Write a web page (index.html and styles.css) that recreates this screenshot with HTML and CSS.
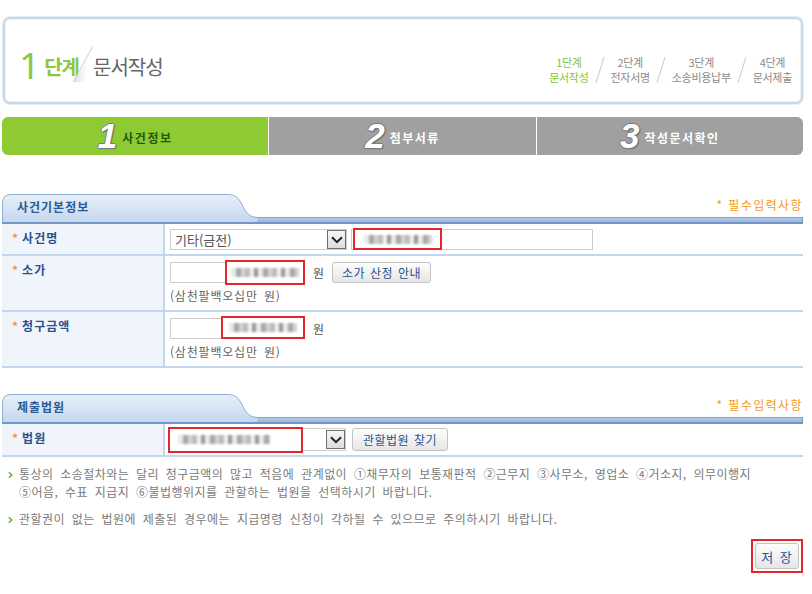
FILE: index.html
```html
<!DOCTYPE html>
<html lang="ko">
<head>
<meta charset="utf-8">
<title>1단계 문서작성</title>
<link rel="stylesheet" href="styles.css">
</head>
<body>
<div class="page">
  <header class="head">
    <div class="head-title">
      <span class="h-num">1</span>
      <span class="h-step">단계</span>
      <svg class="h-slash" width="26" height="40" viewBox="0 0 26 40">
        <defs>
          <linearGradient id="sl" x1="0" y1="0" x2="1" y2="0">
            <stop offset="0" stop-color="#d9d9d9"/>
            <stop offset="1" stop-color="#ffffff" stop-opacity="0"/>
          </linearGradient>
        </defs>
        <polygon points="24,2 4,38 16,38" fill="url(#sl)"/>
        <line x1="24" y1="2" x2="4" y2="38" stroke="#cfcfcf" stroke-width="1"/>
      </svg>
      <span class="h-name">문서작성</span>
    </div>
    <ol class="steps">
      <li class="step on"><span>1단계</span><span>문서작성</span></li>
      <li class="sep"><svg width="10" height="28" viewBox="0 0 10 28"><line x1="9" y1="1" x2="1" y2="27" stroke="#c9c9c9" stroke-width="1"/></svg></li>
      <li class="step"><span>2단계</span><span>전자서명</span></li>
      <li class="sep"><svg width="10" height="28" viewBox="0 0 10 28"><line x1="9" y1="1" x2="1" y2="27" stroke="#c9c9c9" stroke-width="1"/></svg></li>
      <li class="step"><span>3단계</span><span>소송비용납부</span></li>
      <li class="sep"><svg width="10" height="28" viewBox="0 0 10 28"><line x1="9" y1="1" x2="1" y2="27" stroke="#c9c9c9" stroke-width="1"/></svg></li>
      <li class="step"><span>4단계</span><span>문서제출</span></li>
    </ol>
  </header>

  <nav class="tabs">
    <div class="tab on"><span class="tnum">1</span><span class="tlabel">사건정보</span></div>
    <div class="tab"><span class="tnum">2</span><span class="tlabel">첨부서류</span></div>
    <div class="tab"><span class="tnum">3</span><span class="tlabel">작성문서확인</span></div>
  </nav>

  <section class="sec sec1">
    <div class="sec-head">
      <div class="sec-tab">
        <svg width="256" height="30" viewBox="0 0 256 30">
          <defs>
            <linearGradient id="tg1" x1="0" y1="0" x2="0" y2="1">
              <stop offset="0" stop-color="#e8f0f9"/>
              <stop offset="1" stop-color="#c2d5ec"/>
            </linearGradient>
          </defs>
          <path d="M0.5,30 V9 Q0.5,0.5 9,0.5 H226 Q234,0.5 238,7 L243,16 Q247,23.5 256,23.5 V30 Z" fill="url(#tg1)" stroke="#8eb0d6"/>
          <rect x="0" y="28" width="256" height="2" fill="#7097c7"/>
        </svg>
        <h2>사건기본정보</h2>
      </div>
      <p class="req">* 필수입력사항</p>
      <div class="bar"></div>
    </div>

    <div class="row">
      <div class="lbl"><i>*</i>사건명</div>
      <div class="val">
        <div class="line">
          <div class="sel sel-case"><span class="sel-text">기타(금전)</span><span class="sel-btn"><svg width="12" height="8" viewBox="0 0 12 8"><path d="M1 1.2 L6 6.2 L11 1.2" stroke="#222" stroke-width="2" fill="none"/></svg></span></div>
          <div class="inp inp-name"><span class="redbox rb-name"><span class="mosaic"></span></span></div>
        </div>
      </div>
    </div>

    <div class="row">
      <div class="lbl"><i>*</i>소가</div>
      <div class="val">
        <div class="line">
          <div class="inp inp-num"><span class="redbox rb-num1"><span class="mosaic"></span></span></div>
          <span class="unit">원</span>
          <button class="btn btn-guide" type="button">소가 산정 안내</button>
        </div>
        <p class="hint">(삼천팔백오십만 원)</p>
      </div>
    </div>

    <div class="row">
      <div class="lbl"><i>*</i>청구금액</div>
      <div class="val">
        <div class="line">
          <div class="inp inp-num"><span class="redbox rb-num2"><span class="mosaic"></span></span></div>
          <span class="unit">원</span>
        </div>
        <p class="hint">(삼천팔백오십만 원)</p>
      </div>
    </div>
  </section>

  <section class="sec sec2">
    <div class="sec-head">
      <div class="sec-tab">
        <svg width="256" height="30" viewBox="0 0 256 30">
          <defs>
            <linearGradient id="tg2" x1="0" y1="0" x2="0" y2="1">
              <stop offset="0" stop-color="#e8f0f9"/>
              <stop offset="1" stop-color="#c2d5ec"/>
            </linearGradient>
          </defs>
          <path d="M0.5,30 V9 Q0.5,0.5 9,0.5 H226 Q234,0.5 238,7 L243,16 Q247,23.5 256,23.5 V30 Z" fill="url(#tg2)" stroke="#8eb0d6"/>
          <rect x="0" y="28" width="256" height="2" fill="#7097c7"/>
        </svg>
        <h2>제출법원</h2>
      </div>
      <p class="req">* 필수입력사항</p>
      <div class="bar"></div>
    </div>

    <div class="row">
      <div class="lbl"><i>*</i>법원</div>
      <div class="val val-court">
        <div class="line">
          <div class="sel sel-court"><span class="redbox rb-court"><span class="mosaic mosaic-long"></span></span><span class="sel-btn"><svg width="12" height="8" viewBox="0 0 12 8"><path d="M1 1.2 L6 6.2 L11 1.2" stroke="#222" stroke-width="2" fill="none"/></svg></span></div>
          <button class="btn btn-court" type="button">관할법원 찾기</button>
        </div>
      </div>
    </div>
  </section>

  <div class="notes">
    <p class="note"><svg class="arrow" width="6" height="8" viewBox="0 0 6 8"><path d="M1 0.5 L5 4 L1 7.5 L0.5 6 L2.8 4 L0.5 2 Z" fill="#6cb22c"/></svg><span>통상의 소송절차와는 달리 청구금액의 많고 적음에 관계없이 ①채무자의 보통재판적 ②근무지 ③사무소, 영업소 ④거소지, 의무이행지<br>⑤어음, 수표 지급지 ⑥불법행위지를 관할하는 법원을 선택하시기 바랍니다.</span></p>
    <p class="note"><svg class="arrow" width="6" height="8" viewBox="0 0 6 8"><path d="M1 0.5 L5 4 L1 7.5 L0.5 6 L2.8 4 L0.5 2 Z" fill="#6cb22c"/></svg><span>관할권이 없는 법원에 제출된 경우에는 지급명령 신청이 각하될 수 있으므로 주의하시기 바랍니다.</span></p>
  </div>

  <div class="actions">
    <div class="save-wrap"><button class="btn btn-save" type="button">저 장</button></div>
  </div>
</div>
</body>
</html>
```

FILE: styles.css
```css
html, body {
  margin: 0;
  padding: 0;
  background: #ffffff;
}

body {
  font-family: "Noto Sans CJK KR", "Noto Sans", sans-serif;
  font-size: 12px;
  color: #666;
}

.page {
  width: 801px;
  margin-left: 2px;
}

/* ---------- header ---------- */
.head {
  margin: 17px 0 0 1px;
  height: 87px;
  box-sizing: border-box;
  border: 2px solid #c6d9ea;
  border-radius: 7px;
  box-shadow: 0 0 0 1px #e4eef7, inset 0 0 0 1px #eef4fa;
  display: flex;
  align-items: flex-end;
  justify-content: space-between;
  padding: 0 9px 0 14px;
}

.head-title {
  display: flex;
  align-items: flex-end;
  margin-bottom: 17px;
}

.h-num {
  font-family: "Noto Sans", sans-serif;
  font-size: 37px;
  line-height: 40px;
  color: #8dc63f;
  margin-right: 4px;
}

.h-step {
  font-size: 20px;
  font-weight: 700;
  line-height: 26px;
  color: #8dc63f;
  letter-spacing: -1px;
  margin-bottom: 5px;
}

.h-slash {
  margin-left: -10px;
  margin-bottom: 1px;
}

.h-name {
  font-size: 20px;
  line-height: 26px;
  color: #666;
  letter-spacing: -1px;
  margin-left: -2px;
  margin-bottom: 5px;
}

.steps {
  list-style: none;
  margin: 0 0 17px 0;
  padding: 0;
  display: flex;
  align-items: flex-end;
  gap: 6px;
}

.step {
  display: flex;
  flex-direction: column;
  align-items: center;
  font-size: 11px;
  line-height: 15px;
  color: #8a8a8a;
  letter-spacing: -0.3px;
}

.step.on {
  color: #86c33a;
}

.sep {
  display: flex;
  margin-bottom: 1px;
}

/* ---------- tabs ---------- */
.tabs {
  margin-top: 13px;
  display: flex;
  gap: 1px;
  height: 38px;
}

.tab {
  flex: 1;
  display: flex;
  align-items: center;
  justify-content: center;
  background: #a0a0a0;
  color: #fff;
}

.tab:first-child {
  border-radius: 6px 0 0 6px;
}

.tab:last-child {
  border-radius: 0 6px 6px 0;
}

.tab.on {
  background: #8ecb32;
}

.tnum {
  font-family: "Liberation Sans", sans-serif;
  font-style: italic;
  font-weight: 700;
  font-size: 35px;
  line-height: 38px;
  color: #fff;
  text-shadow: 1px 0 0 #7b7b7b, -1px 0 0 #7b7b7b, 0 1px 0 #7b7b7b, 0 -1px 0 #7b7b7b, 1px 1px 1px #555;
  margin-right: 5px;
}

.tlabel {
  font-size: 12px;
  font-weight: 700;
  letter-spacing: 1.5px;
  color: #fff;
  margin-top: 2px;
}

.tab.on .tlabel {
  color: #1f5a0d;
}

/* ---------- sections ---------- */
.sec1 {
  margin-top: 39px;
}

.sec2 {
  margin-top: 26px;
}

.sec-head {
  display: grid;
  grid-template-columns: 256px 1fr;
  grid-template-rows: 23px 7px;
}

.sec-tab {
  grid-row: 1 / 3;
  grid-column: 1;
  display: grid;
}

.sec-tab svg,
.sec-tab h2 {
  grid-area: 1 / 1;
}

.sec-tab svg {
  display: block;
}

.sec-tab h2 {
  margin: 0;
  padding: 5px 0 0 15px;
  font-size: 12px;
  line-height: 16px;
  font-weight: 700;
  color: #2a5a96;
  letter-spacing: 1px;
}

.req {
  grid-row: 1;
  grid-column: 2;
  justify-self: end;
  align-self: center;
  margin: 0 0 2px 0;
  font-size: 12px;
  line-height: 16px;
  color: #f39a1e;
  letter-spacing: 1.4px;
}

.bar {
  grid-row: 2;
  grid-column: 2;
  box-sizing: border-box;
  border-top: 1px solid #7fa2cf;
  border-bottom: 2px solid #7097c7;
  border-right: 1px solid #6c92c3;
  background: linear-gradient(#b7cde8, #95b3da);
}

.row {
  display: grid;
  grid-template-columns: 163px 1fr;
  border-bottom: 2px solid #c4d6ee;
}

.lbl {
  background: #f0f5fc;
  border-right: 2px solid #c4d6ee;
  padding: 6px 0 0 10px;
  font-size: 12px;
  line-height: 16px;
  font-weight: 700;
  color: #27518d;
  letter-spacing: 1px;
}

.lbl i {
  font-style: normal;
  color: #f39a1e;
  margin-right: 3px;
  font-weight: 700;
}

.val {
  padding: 5px 5px 4px 5px;
}

.row + .row .val {
  padding: 6px 5px 6px 5px;
}

.line {
  display: flex;
  align-items: center;
}

.sel {
  box-sizing: border-box;
  height: 21px;
  border: 1px solid #cdcdcd;
  display: flex;
  align-items: center;
  justify-content: space-between;
  background: #fff;
}

.sel-case {
  width: 177px;
}

.sel-text {
  padding-left: 4px;
  font-size: 13px;
  color: #555;
  line-height: 17px;
}

.sel-btn {
  box-sizing: border-box;
  width: 19px;
  height: 19px;
  border: 1px solid #6f6f6f;
  background: linear-gradient(#f7f7f7, #dcdcdc);
  display: flex;
  align-items: center;
  justify-content: center;
}

.inp {
  box-sizing: border-box;
  height: 21px;
  border: 1px solid #cdcdcd;
  background: #fff;
  display: flex;
  align-items: center;
}

.inp-name {
  width: 242px;
  margin-left: 4px;
}

.inp-num {
  width: 135px;
  justify-content: flex-end;
}

.redbox {
  box-sizing: border-box;
  border: 2px solid #e3262b;
  display: flex;
  align-items: center;
  justify-content: center;
  background: #fff;
}

.rb-name {
  width: 89px;
  height: 22px;
  margin: -1px 0 0 1px;
}

.rb-num1 {
  width: 80px;
  height: 25px;
  margin: 0 -1px 0 0;
}

.rb-num2 {
  width: 84px;
  height: 23px;
  margin: -2px -1px 0 0;
}

.rb-court {
  width: 135px;
  height: 26px;
  margin: 0 0 0 -1px;
  justify-content: flex-start;
  padding-left: 8px;
}

.mosaic {
  display: block;
  width: 68px;
  height: 9px;
  background: repeating-linear-gradient(90deg, #eaeaea 0 5px, #a8a8a8 5px 10px, #d3d3d3 10px 14px, #bcbcbc 14px 19px, #f1f1f1 19px 23px, #999 23px 27px);
  filter: blur(0.8px);
}

.mosaic-long {
  width: 92px;
}

.unit {
  margin-left: 8px;
  font-size: 12px;
  color: #555;
}

.btn {
  box-sizing: border-box;
  height: 21px;
  border: 1px solid #c3c3c3;
  border-radius: 3px;
  background: linear-gradient(#fdfdfd, #e6e6e6);
  font-family: "Noto Sans CJK KR", "Noto Sans", sans-serif;
  font-size: 12px;
  line-height: 17px;
  color: #25548f;
  padding: 0;
  letter-spacing: 0.5px;
  word-spacing: 1px;
}

.btn-guide {
  width: 99px;
  margin-left: 8px;
}

.hint {
  margin: 5px 0 0 0;
  font-size: 12px;
  line-height: 16px;
  color: #666;
  letter-spacing: 0.8px;
  word-spacing: 2px;
}

.val-court {
  padding: 4px 5px 4px 3px;
}

.sel-court {
  width: 178px;
  height: 23px;
}

.btn-court {
  width: 96px;
  height: 23px;
  margin-left: 6px;
}

/* ---------- notes ---------- */
.notes {
  margin-top: 8px;
}

.note {
  margin: 0;
  display: flex;
  align-items: flex-start;
  padding-left: 6px;
  font-size: 12px;
  line-height: 18px;
  color: #7a7a7a;
  letter-spacing: 0.45px;
  word-spacing: 3px;
}

.note + .note {
  margin-top: 9px;
}

.arrow {
  flex: none;
  margin: 6px 5px 0 0;
}

.actions {
  margin-top: 11px;
  display: flex;
  justify-content: flex-end;
  padding-right: 0;
}

.save-wrap {
  border: 2px solid #e3262b;
  padding: 2px;
}

.btn-save {
  width: 44px;
  height: 26px;
  font-size: 13px;
  letter-spacing: 1px;
  display: block;
}
```
